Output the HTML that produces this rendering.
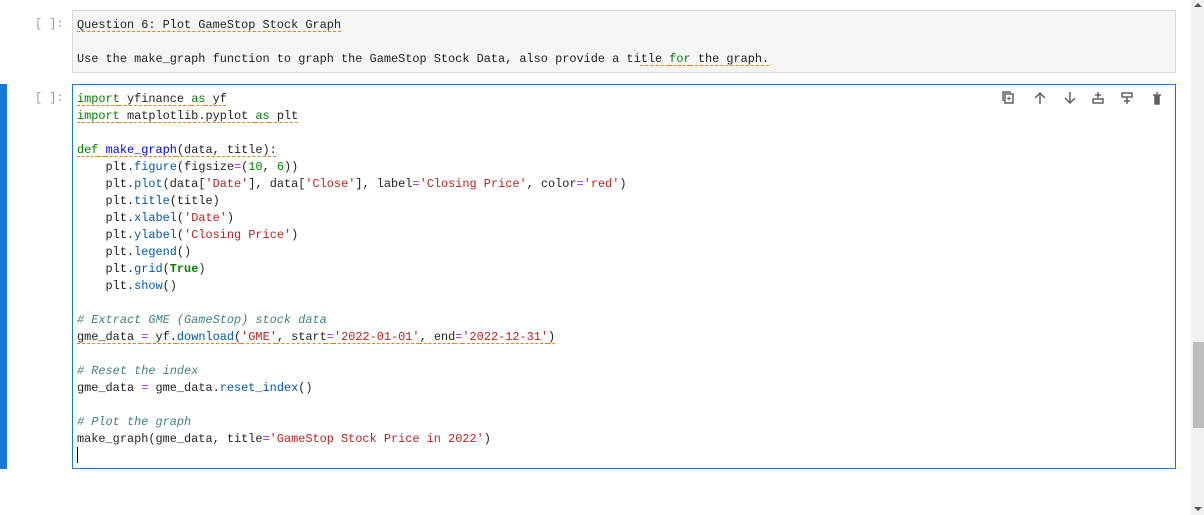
<!DOCTYPE html>
<html><head><meta charset="utf-8"><style>
*{margin:0;padding:0;box-sizing:border-box}
body{width:1204px;height:515px;background:#fff;position:relative;overflow:hidden;font-family:"Liberation Mono",monospace;font-size:11.9px;color:#212121}
.prompt{position:absolute;left:35px;color:#999;font-size:11.9px}
.md{position:absolute;left:72px;top:10px;width:1104px;height:63px;background:#f5f5f5;border:1px solid #dcdcdc}
.code{position:absolute;left:72px;top:84px;width:1104px;height:385px;border:1px solid #1976d2}
.bar{position:absolute;left:0;top:84px;width:7px;height:385px;background:#1976d2}
.line{position:absolute;left:4px;white-space:pre;line-height:17px;height:17px}
.k{color:#008000}
.b{font-weight:bold}
.s{color:#ba2121}
.c{color:#408080;font-style:italic}
.n{color:#080}
.o{color:#aa22ff}
.p{color:#05a}
.f{color:#00f}
.u{text-decoration:underline dashed #e5801e;text-decoration-thickness:1px;text-underline-offset:3px}
.sb{position:absolute;left:1191px;top:0;width:13px;height:515px;background:#f0f0f0}
.th{position:absolute;left:1193px;top:342px;width:11px;height:86px;background:#bdbdbd}
.ic{position:absolute;top:90px}
</style></head><body>
<div class="prompt" style="top:17px">[ ]:</div>
<div class="md">
<div class="line" style="top:6px"><span class="u">Question 6: Plot GameStop Stock Graph</span></div>
<div class="line" style="top:40px">Use the make_graph function to graph the GameStop Stock Data, also provide a ti<span class="u">tle <span class="k">for</span> the graph.</span></div>
</div>
<div class="bar"></div>
<div class="prompt" style="top:91px">[ ]:</div>
<div class="code">
<div class="line" style="top:6px"><span class="u"><span class="k">import</span> yfinance <span class="k">as</span> yf</span></div>
<div class="line" style="top:23px"><span class="u"><span class="k">import</span> matplotlib.pyplot <span class="k">as</span> plt</span></div>
<div class="line" style="top:57px"><span class="u"><span class="k">def</span> <span class="f">make_graph</span>(data, title):</span></div>
<div class="line" style="top:74px">    plt.<span class="p">figure</span>(figsize<span class="o">=</span>(<span class="n">10</span>, <span class="n">6</span>))</div>
<div class="line" style="top:91px">    plt.<span class="p">plot</span>(data[<span class="s">'Date'</span>], data[<span class="s">'Close'</span>], label<span class="o">=</span><span class="s">'Closing Price'</span>, color<span class="o">=</span><span class="s">'red'</span>)</div>
<div class="line" style="top:108px">    plt.<span class="p">title</span>(title)</div>
<div class="line" style="top:125px">    plt.<span class="p">xlabel</span>(<span class="s">'Date'</span>)</div>
<div class="line" style="top:142px">    plt.<span class="p">ylabel</span>(<span class="s">'Closing Price'</span>)</div>
<div class="line" style="top:159px">    plt.<span class="p">legend</span>()</div>
<div class="line" style="top:176px">    plt.<span class="p">grid</span>(<span class="k b">True</span>)</div>
<div class="line" style="top:193px">    plt.<span class="p">show</span>()</div>
<div class="line" style="top:227px"><span class="c"># Extract GME (GameStop) stock data</span></div>
<div class="line" style="top:244px"><span class="u">gme_data <span class="o">=</span> yf.<span class="p">download</span>(<span class="s">'GME'</span>, start<span class="o">=</span><span class="s">'2022-01-01'</span>, end<span class="o">=</span><span class="s">'2022-12-31'</span>)</span></div>
<div class="line" style="top:278px"><span class="c"># Reset the index</span></div>
<div class="line" style="top:295px">gme_data <span class="o">=</span> gme_data.<span class="p">reset_index</span>()</div>
<div class="line" style="top:329px"><span class="c"># Plot the graph</span></div>
<div class="line" style="top:346px">make_graph(gme_data, title<span class="o">=</span><span class="s">'GameStop Stock Price in 2022'</span>)</div>
<div style="position:absolute;left:4px;top:362px;width:1px;height:16px;background:#000"></div>
</div>
<svg class="ic" style="left:1000px" width="170" height="16" viewBox="0 0 170 16" fill="none" stroke="#616161" stroke-width="1.5">
<rect x="5" y="4" width="8" height="9" />
<path d="M3 11V2h8"/>
<path d="M9 6.5v4M7 8.5h4" stroke-width="1"/>
<path d="M40 14V3M35 8l5-5 5 5"/>
<path d="M70 2v11M65 8l5 5 5-5"/>
<path d="M93 9h10v4H93zM98 2v6M95 5h6"/>
<path d="M122 3h10v4h-10zM127 7v7M124 11h6"/>
<path d="M153 5h8M155 5v9h4V5M156 3h2" fill="#616161"/>
</svg>
<div class="sb"></div>
<div class="th"></div>
<div style="position:absolute;left:1194px;top:3px;width:0;height:0;border-left:4px solid transparent;border-right:4px solid transparent;border-bottom:4px solid #505050"></div>
<div style="position:absolute;left:1194px;top:507px;width:0;height:0;border-left:4px solid transparent;border-right:4px solid transparent;border-top:4px solid #505050"></div>
</body></html>
